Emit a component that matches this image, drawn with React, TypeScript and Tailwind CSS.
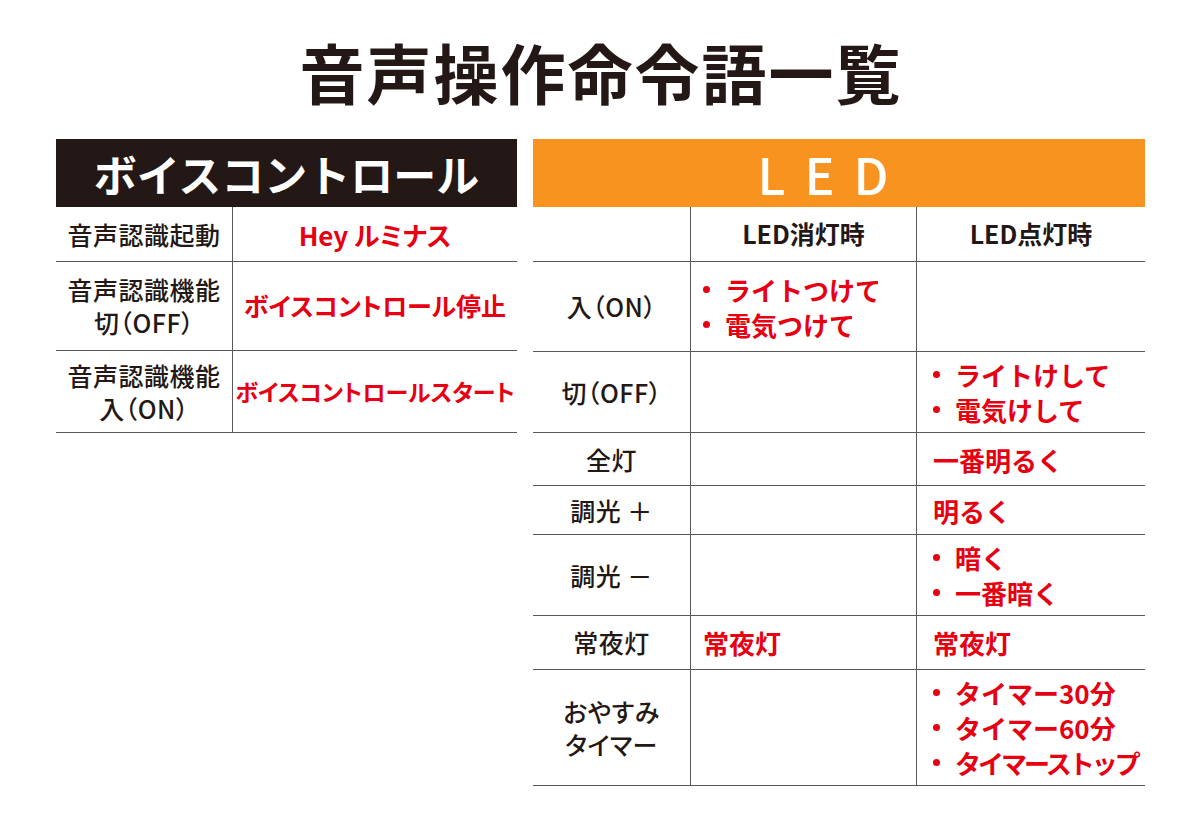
import React from 'react';

const FONT = { fontFamily: '"Noto Sans CJK JP", "Noto Sans", sans-serif' };

interface LedRow {
  label: string[];
  off: string[];
  on: string[];
  offBullets?: boolean;
  onBullets?: boolean;
  height: string;
}

const ledRows: LedRow[] = [
  { label: ['入（ON）'], off: ['ライトつけて', '電気つけて'], on: [], offBullets: true, height: 'h-[90px]' },
  { label: ['切（OFF）'], off: [], on: ['ライトけして', '電気けして'], onBullets: true, height: 'h-[81px]' },
  { label: ['全灯'], off: [], on: ['一番明るく'], height: 'h-[53px]' },
  { label: ['調光 ＋'], off: [], on: ['明るく'], height: 'h-[49px]' },
  { label: ['調光 －'], off: [], on: ['暗く', '一番暗く'], onBullets: true, height: 'h-[81px]' },
  { label: ['常夜灯'], off: ['常夜灯'], on: ['常夜灯'], height: 'h-[54px]' },
  { label: ['おやすみ', 'タイマー'], off: [], on: ['タイマー30分', 'タイマー60分', 'タイマーストップ'], onBullets: true, height: 'h-[116px]' },
];

const RedList: React.FC<{ items: string[]; bullets?: boolean }> = ({ items, bullets }) => (
  <div className="flex flex-col text-[26px] font-bold leading-[35px] text-[#e60012]">
    {items.map((t, i) => (
      <div key={i} className="flex items-center whitespace-nowrap">
        {bullets && <span className="mr-[15px] inline-block h-[7px] w-[7px] shrink-0 rounded-full bg-[#e60012]" />}
        <span className={t.length > 7 ? 'tracking-[-3px]' : ''}>{t}</span>
      </div>
    ))}
  </div>
);

const Label: React.FC<{ lines: string[] }> = ({ lines }) => (
  <div className="flex flex-col items-center text-[25px] font-medium leading-[33px] tracking-[0.5px] text-[#231815] [font-feature-settings:'palt']">
    {lines.map((l, i) => (
      <span key={i} className="whitespace-nowrap">{l}</span>
    ))}
  </div>
);

const VoicePanel = () => {
  const rows = [
    { label: ['音声認識起動'], value: 'Hey ルミナス', size: 'text-[26px]', h: 'h-[55px]' },
    { label: ['音声認識機能', '切（OFF）'], value: 'ボイスコントロール停止', size: 'text-[25px]', h: 'h-[89px]' },
    { label: ['音声認識機能', '入（ON）'], value: 'ボイスコントロールスタート', size: 'text-[23px]', h: 'h-[82px]' },
  ];
  return (
    <div className="w-[461px] shrink-0">
      <div className="flex h-[68px] items-center justify-center bg-[#231815] text-[43px] font-bold text-white">
        ボイスコントロール
      </div>
      {rows.map((r, i) => (
        <div key={i} className={`flex ${r.h} border-b border-[#595757]`}>
          <div className="flex w-[176px] shrink-0 items-center justify-center">
            <Label lines={r.label} />
          </div>
          <div className={`flex flex-1 items-center justify-center border-l border-[#595757] ${r.size} font-bold whitespace-nowrap text-[#e60012] [font-feature-settings:'palt']`}>
            {r.value}
          </div>
        </div>
      ))}
    </div>
  );
};

const LedPanel = () => (
  <div className="w-[612px] shrink-0">
    <div className="flex h-[68px] items-center justify-center bg-[#f7931e] pr-[32px] text-[50px] font-medium tracking-[19px] text-white">
      <span className="mr-[-19px]">LED</span>
    </div>
    <div className="flex h-[55px] border-b border-[#595757]">
      <div className="w-[157px] shrink-0" />
      <div className="flex w-[226px] shrink-0 items-center justify-center border-l border-[#595757] text-[25px] font-bold text-[#231815]">
        LED消灯時
      </div>
      <div className="flex flex-1 items-center justify-center border-l border-[#595757] text-[25px] font-bold text-[#231815]">
        LED点灯時
      </div>
    </div>
    {ledRows.map((r, i) => (
      <div key={i} className={`flex ${r.height} border-b border-[#595757]`}>
        <div className="flex w-[157px] shrink-0 items-center justify-center">
          <Label lines={r.label} />
        </div>
        <div className="flex w-[226px] shrink-0 items-center border-l border-[#595757] pl-[12px]">
          <RedList items={r.off} bullets={r.offBullets} />
        </div>
        <div className="flex min-w-0 flex-1 items-center border-l border-[#595757] pl-[16px]">
          <RedList items={r.on} bullets={r.onBullets} />
        </div>
      </div>
    ))}
  </div>
);

export default function App() {
  return (
    <div className="h-[840px] w-[1200px] bg-white" style={FONT}>
      <div className="flex h-[139px] justify-center pt-[36px]">
        <h1 className="pl-[2px] text-[65px] font-bold leading-[70px] tracking-[2px] text-[#231815]">
          音声操作命令語一覧
        </h1>
      </div>
      <div className="flex gap-[16px] pl-[56px]">
        <VoicePanel />
        <LedPanel />
      </div>
    </div>
  );
}
